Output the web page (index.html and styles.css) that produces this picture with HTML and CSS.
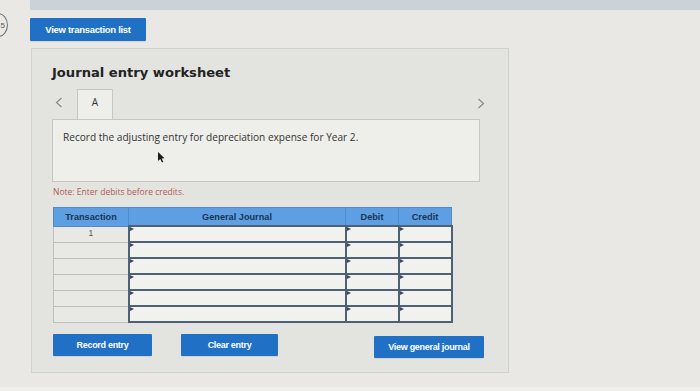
FILE: index.html
```html
<!DOCTYPE html>
<html lang="en">
<head>
<meta charset="utf-8">
<title>Journal entry worksheet</title>
<link rel="stylesheet" href="styles.css">
</head>
<body>
<div class="topband"></div>
<div class="step-circle"><span>5</span></div>
<div class="toolbar">
  <button class="btn btn-list">View transaction list</button>
</div>
<section class="panel">
  <h1 class="title">Journal entry worksheet</h1>
  <div class="tabs">
    <span class="arrow arrow-left">
      <svg width="8" height="11" viewBox="0 0 8 11"><path d="M6.5 1 L1.5 5.5 L6.5 10" fill="none" stroke="#8a8a8a" stroke-width="1.2"/></svg>
    </span>
    <div class="tab">A</div>
    <span class="arrow arrow-right">
      <svg width="8" height="11" viewBox="0 0 8 11"><path d="M1.5 1 L6.5 5.5 L1.5 10" fill="none" stroke="#8a8a8a" stroke-width="1.2"/></svg>
    </span>
  </div>
  <div class="prompt">
    <p>Record the adjusting entry for depreciation expense for Year 2.</p>
    <svg class="cursor" width="8" height="12" viewBox="0 0 8 12"><path d="M1 1 L1 10 L3.2 8 L5 11.5 L6.3 10.8 L4.6 7.4 L7.5 7.2 Z" fill="#1b1b1b"/></svg>
  </div>
  <p class="note">Note: Enter debits before credits.</p>
  <table class="journal">
    <colgroup>
      <col class="c-trans"><col class="c-gj"><col class="c-dr"><col class="c-cr">
    </colgroup>
    <thead>
      <tr><th>Transaction</th><th>General Journal</th><th>Debit</th><th>Credit</th></tr>
    </thead>
    <tbody>
      <tr><td class="tcell">1</td><td class="in"></td><td class="in"></td><td class="in"></td></tr>
      <tr><td class="tcell"></td><td class="in"></td><td class="in"></td><td class="in"></td></tr>
      <tr><td class="tcell"></td><td class="in"></td><td class="in"></td><td class="in"></td></tr>
      <tr><td class="tcell"></td><td class="in"></td><td class="in"></td><td class="in"></td></tr>
      <tr><td class="tcell"></td><td class="in"></td><td class="in"></td><td class="in"></td></tr>
      <tr><td class="tcell"></td><td class="in"></td><td class="in"></td><td class="in"></td></tr>
    </tbody>
  </table>
  <div class="actions">
    <button class="btn btn-record">Record entry</button>
    <button class="btn btn-clear">Clear entry</button>
    <button class="btn btn-view">View general journal</button>
  </div>
</section>
<div class="footband"></div>
</body>
</html>
```
FILE: styles.css
```css
html, body {
  margin: 0;
  padding: 0;
}
body {
  width: 700px;
  height: 391px;
  overflow: hidden;
  position: relative;
  background: #e9e8e4;
  font-family: "Liberation Sans", Arial, sans-serif;
  color: #333;
}
.topband {
  height: 10px;
  margin-left: 30px;
  background: #c9d3d9;
}
.step-circle {
  position: absolute;
  left: -12px;
  top: 13px;
  width: 20px;
  height: 24px;
  border: 1px solid #6d6d6d;
  border-radius: 50%;
  display: flex;
  align-items: center;
  justify-content: flex-end;
  padding-right: 2px;
  box-sizing: border-box;
  font-size: 8px;
  color: #555;
}
.toolbar {
  padding: 8px 0 0 30px;
}
.btn {
  border: none;
  border-radius: 1px;
  background: #2071c6;
  color: #fff;
  font-family: "Liberation Sans", Arial, sans-serif;
  font-weight: bold;
  font-size: 9px;
  letter-spacing: -0.3px;
  padding: 0;
  margin: 0;
  box-shadow: 0 1px 0 rgba(0,0,0,0.08);
}
.btn-list {
  width: 116px;
  height: 23px;
  display: block;
  font-size: 9.5px;
}
.panel {
  margin: 7px 0 0 31px;
  width: 478px;
  height: 325px;
  box-sizing: border-box;
  border: 1px solid #d0d0cc;
  background: #e3e3e0;
  padding: 0 0 0 20px;
}
.title {
  margin: 15px 0 0 0;
  font-family: "DejaVu Sans", Verdana, sans-serif;
  font-weight: bold;
  font-size: 13.1px;
  color: #232323;
  letter-spacing: 0;
  line-height: 18px;
}
.tabs {
  margin-top: 7px;
  height: 30px;
  display: flex;
  align-items: flex-start;
  position: relative;
}
.arrow {
  display: flex;
}
.arrow-left {
  margin: 8px 0 0 3px;
}
.arrow-right {
  margin: 9px 0 0 auto;
  margin-right: 23px;
}
.tab {
  margin-left: 14px;
  width: 36px;
  height: 30px;
  box-sizing: border-box;
  border: 1px solid #c6c6c2;
  border-bottom: none;
  background: #eeeeea;
  text-align: center;
  font-family: "Open Sans", sans-serif;
  font-size: 10px;
  color: #333;
  padding-top: 5px;
  position: relative;
  z-index: 1;
  margin-bottom: -1px;
}
.prompt {
  width: 428px;
  height: 63px;
  box-sizing: border-box;
  border: 1px solid #c6c6c2;
  background: #eeeeea;
  padding: 10px 0 0 10px;
  position: relative;
}
.prompt p {
  margin: 0;
  font-family: "Open Sans", sans-serif;
  font-size: 10.1px;
  color: #333;
  line-height: 14px;
}
.cursor {
  position: absolute;
  left: 104px;
  top: 31px;
}
.note {
  margin: 4px 0 0 1px;
  font-family: "Open Sans", sans-serif;
  font-size: 8.5px;
  color: #b35a55;
  line-height: 11px;
}
.journal {
  margin: 10px 0 0 1px;
  border-collapse: collapse;
  width: 398px;
  table-layout: fixed;
}
.c-trans { width: 75px; }
.c-gj { width: 217px; }
.c-dr { width: 53px; }
.c-cr { width: 53px; }
.journal th {
  height: 17px;
  padding: 0;
  background: #5d9fe2;
  border: 1px solid #4d8bcd;
  font-family: "Liberation Sans", Arial, sans-serif;
  font-weight: bold;
  font-size: 9.2px;
  color: #1d3452;
  text-align: center;
}
.journal td {
  height: 14px;
  padding: 0;
}
.journal .tcell {
  border: 1px solid #bdbdba;
  background: #e8e8e5;
  text-align: center;
  vertical-align: top;
  font-family: "Liberation Sans", Arial, sans-serif;
  font-size: 8.5px;
  color: #555;
  line-height: 13px;
}
.journal .in {
  border: 2px solid #4e5f78;
  background: #f1f1ee;
  position: relative;
}
.journal .in::before {
  content: "";
  position: absolute;
  left: 0;
  top: 0;
  border-left: 4px solid #3a4a60;
  border-top: 2px solid transparent;
  border-bottom: 2px solid transparent;
}
.actions {
  display: flex;
  margin: 11px 0 0 1px;
  align-items: flex-start;
}
.actions .btn {
  height: 22px;
}
.btn-record {
  width: 99px;
}
.btn-clear {
  width: 97px;
  margin-left: 29px;
}
.btn-view {
  width: 110px;
  margin-left: 96px;
  margin-top: 2px;
}
.footband {
  position: absolute;
  left: 0;
  right: 0;
  bottom: 0;
  height: 4px;
  background: #f0efec;
}
```
